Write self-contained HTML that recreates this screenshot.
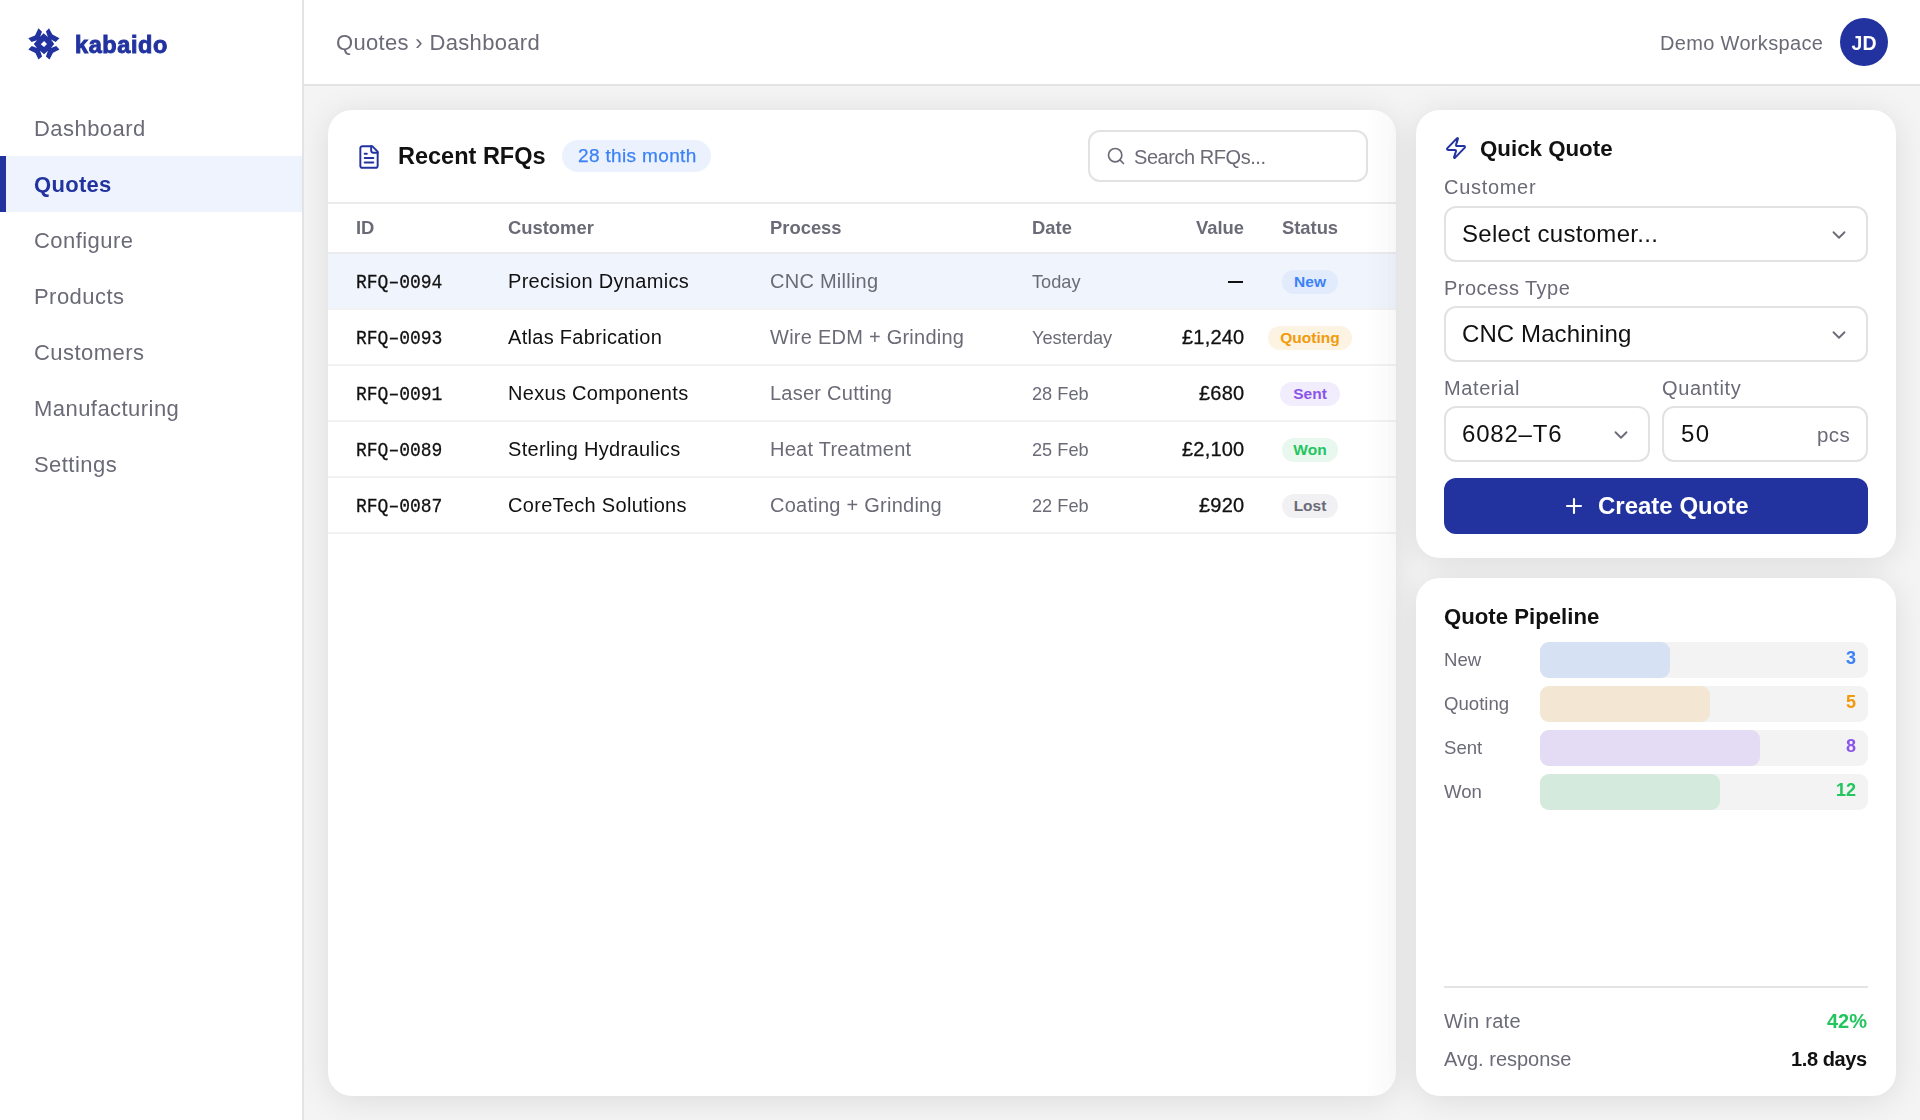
<!DOCTYPE html>
<html><head><meta charset="utf-8">
<style>
*{margin:0;padding:0;box-sizing:border-box}
html,body{width:1920px;height:1120px;overflow:hidden;background:#fff;font-family:"Liberation Sans",sans-serif;}
.a{will-change:transform}
.a{position:absolute;white-space:nowrap;line-height:1}
.b{font-weight:bold}
.g{color:#6b6b78}
.d{color:#111}
.r{position:absolute}
.card{position:absolute;background:#fff;border-radius:24px;box-shadow:0 4px 32px rgba(0,0,0,0.1)}
.box{position:absolute;border:2px solid #e2e2e4;border-radius:12px;background:#fff}
.mono{font-family:"Liberation Mono",monospace;color:#111}
.badge{position:absolute;height:24px;border-radius:12px;font-size:15.5px;font-weight:bold;line-height:24px;text-align:center}
</style></head><body>
<div class="r" style="left:0;top:0;width:304px;height:1120px;background:#fff;border-right:2px solid #e4e4e7"></div>
<svg class="a" style="left:28px;top:28px" width="32" height="32" viewBox="0 0 32 32"><path fill="#2233a0" fill-rule="evenodd" d="M10.5 0.3L14 3.7L12.1 8.7L15.6 5.2L19.9 9L17.9 3.5L21 0.3L24.4 6.5L31.5 10.3L27.7 13.9L23 11.6L26.2 16.1L23 19.9L28.2 18.1L31.5 21.5L25 24.8L21.5 31.5L17.9 28.4L19.9 22.8L16.1 26.2L12.1 22.8L14.1 28.4L10.5 31.5L7.4 25L0.3 21.5L3.8 18.1L9 20.1L5.8 16.1L9 12.3L3.6 13.9L0.3 10.3L7 7.6Z M16.1 13L19 16.1L16.1 19L12.8 16.3Z"/></svg>
<div class="a b" style="left:74.5px;top:34.11px;font-size:23.5px;letter-spacing:0.6px;color:#2233a0;-webkit-text-stroke:0.9px #2233a0;">kabaido</div>
<div class="r" style="left:0;top:156px;width:302px;height:56px;background:#eef3fd"></div>
<div class="r" style="left:0;top:156px;width:6px;height:56px;background:#2233a0"></div>
<div class="a g" style="left:34px;top:118.38px;font-size:22px;letter-spacing:0.45px;">Dashboard</div>
<div class="a b" style="left:34px;top:174.38px;font-size:22px;letter-spacing:0.3px;color:#2233a0">Quotes</div>
<div class="a g" style="left:34px;top:230.38px;font-size:22px;letter-spacing:0.45px;">Configure</div>
<div class="a g" style="left:34px;top:286.38px;font-size:22px;letter-spacing:0.45px;">Products</div>
<div class="a g" style="left:34px;top:342.38px;font-size:22px;letter-spacing:0.45px;">Customers</div>
<div class="a g" style="left:34px;top:398.38px;font-size:22px;letter-spacing:0.45px;">Manufacturing</div>
<div class="a g" style="left:34px;top:454.38px;font-size:22px;letter-spacing:0.45px;">Settings</div>
<div class="r" style="left:304px;top:0;width:1616px;height:86px;background:#fff;border-bottom:2px solid #e4e4e7"></div>
<div class="r" style="left:304px;top:86px;width:1616px;height:1034px;background:#f4f4f4"></div>
<div class="a g" style="left:336px;top:32.38px;font-size:22px;letter-spacing:0.33px;">Quotes › Dashboard</div>
<div class="a g" style="right:97px;top:33.07px;font-size:20px;letter-spacing:0.33px;">Demo Workspace</div>
<div class="r" style="left:1840px;top:18px;width:48px;height:48px;border-radius:50%;background:#2233a0"></div>
<div class="a b" style="left:1764px;width:200px;text-align:center;top:34.49px;font-size:19.5px;color:#fff">JD</div>
<div class="card" style="left:328px;top:110px;width:1068px;height:986px;overflow:hidden"><svg class="a" style="left:28px;top:34px" width="26" height="26" viewBox="0 0 24 24" fill="none" stroke="#2233a0" stroke-width="1.8" stroke-linecap="round" stroke-linejoin="round"><path d="M15 2H6a2 2 0 0 0-2 2v16a2 2 0 0 0 2 2h12a2 2 0 0 0 2-2V7Z"/><path d="M14 2v4a2 2 0 0 0 2 2h4"/><path d="M10 9H8"/><path d="M16 13H8"/><path d="M16 17H8"/></svg>
<div class="a b d" style="left:70px;top:35.11px;font-size:23.5px;">Recent RFQs</div>
<div class="r" style="left:234px;top:30px;width:149px;height:32px;border-radius:16px;background:#ebf2fd"></div>
<div class="a " style="left:250px;top:35.72px;font-size:19px;letter-spacing:0.35px;color:#3b82f6;-webkit-text-stroke:0.25px #3b82f6">28 this month</div>
<div class="box" style="left:760px;top:20px;width:280px;height:52px"></div>
<svg class="a" style="left:778px;top:36px" width="20" height="20" viewBox="0 0 24 24" fill="none" stroke="#6b6b78" stroke-width="2" stroke-linecap="round" stroke-linejoin="round"><circle cx="11" cy="11" r="8"/><path d="m21 21-4.3-4.3"/></svg>
<div class="a g" style="left:806px;top:37.27px;font-size:20px;letter-spacing:-0.45px;">Search RFQs...</div>
<div class="r" style="left:0;top:92px;width:1068px;height:2px;background:#ebebed"></div>
<div class="a b g" style="left:28px;top:109.02px;font-size:18.4px;">ID</div>
<div class="a b g" style="left:180px;top:109.02px;font-size:18.4px;">Customer</div>
<div class="a b g" style="left:442px;top:109.02px;font-size:18.4px;">Process</div>
<div class="a b g" style="left:704px;top:109.02px;font-size:18.4px;">Date</div>
<div class="a b g" style="right:152px;top:109.02px;font-size:18.4px;">Value</div>
<div class="a b g" style="left:882px;width:200px;text-align:center;top:109.02px;font-size:18.4px;">Status</div>
<div class="r" style="left:0;top:142px;width:1068px;height:2px;background:#ebebed"></div>
<div class="r" style="left:0;top:144px;width:1068px;height:54px;background:#eff4fd"></div>
<div class="a mono" style="left:28px;top:164.16px;font-size:18px;-webkit-text-stroke:0.25px #111;transform:scaleY(1.08);transform-origin:0 85%">RFQ–0094</div>
<div class="a d" style="left:180px;top:161.47px;font-size:20px;letter-spacing:0.3px;">Precision Dynamics</div>
<div class="a g" style="left:442px;top:161.47px;font-size:20px;letter-spacing:0.25px;">CNC Milling</div>
<div class="a g" style="left:704px;top:162.99px;font-size:18.2px;">Today</div>
<div class="r" style="left:900px;top:171px;width:15px;height:2px;background:#111"></div>
<div class="badge" style="left:954px;top:159.5px;width:56px;background:#e1ebfc;color:#3b82f6">New</div>
<div class="r" style="left:0;top:198px;width:1068px;height:2px;background:#f2f2f3"></div>
<div class="a mono" style="left:28px;top:220.16px;font-size:18px;-webkit-text-stroke:0.25px #111;transform:scaleY(1.08);transform-origin:0 85%">RFQ–0093</div>
<div class="a d" style="left:180px;top:217.47px;font-size:20px;letter-spacing:0.3px;">Atlas Fabrication</div>
<div class="a g" style="left:442px;top:217.47px;font-size:20px;letter-spacing:0.25px;">Wire EDM + Grinding</div>
<div class="a g" style="left:704px;top:218.99px;font-size:18.2px;">Yesterday</div>
<div class="a d" style="right:152px;top:217.47px;font-size:20px;letter-spacing:0.2px;-webkit-text-stroke:0.3px #111">£1,240</div>
<div class="badge" style="left:940px;top:215.5px;width:84px;background:#fdf3e2;color:#f29a0e">Quoting</div>
<div class="r" style="left:0;top:254px;width:1068px;height:2px;background:#f2f2f3"></div>
<div class="a mono" style="left:28px;top:276.16px;font-size:18px;-webkit-text-stroke:0.25px #111;transform:scaleY(1.08);transform-origin:0 85%">RFQ–0091</div>
<div class="a d" style="left:180px;top:273.47px;font-size:20px;letter-spacing:0.3px;">Nexus Components</div>
<div class="a g" style="left:442px;top:273.47px;font-size:20px;letter-spacing:0.25px;">Laser Cutting</div>
<div class="a g" style="left:704px;top:274.99px;font-size:18.2px;">28 Feb</div>
<div class="a d" style="right:152px;top:273.47px;font-size:20px;letter-spacing:0.2px;-webkit-text-stroke:0.3px #111">£680</div>
<div class="badge" style="left:952px;top:271.5px;width:60px;background:#f2edfd;color:#8b55ea">Sent</div>
<div class="r" style="left:0;top:310px;width:1068px;height:2px;background:#f2f2f3"></div>
<div class="a mono" style="left:28px;top:332.16px;font-size:18px;-webkit-text-stroke:0.25px #111;transform:scaleY(1.08);transform-origin:0 85%">RFQ–0089</div>
<div class="a d" style="left:180px;top:329.47px;font-size:20px;letter-spacing:0.3px;">Sterling Hydraulics</div>
<div class="a g" style="left:442px;top:329.47px;font-size:20px;letter-spacing:0.25px;">Heat Treatment</div>
<div class="a g" style="left:704px;top:330.99px;font-size:18.2px;">25 Feb</div>
<div class="a d" style="right:152px;top:329.47px;font-size:20px;letter-spacing:0.2px;-webkit-text-stroke:0.3px #111">£2,100</div>
<div class="badge" style="left:954px;top:327.5px;width:56px;background:#e9f8ef;color:#22c55e">Won</div>
<div class="r" style="left:0;top:366px;width:1068px;height:2px;background:#f2f2f3"></div>
<div class="a mono" style="left:28px;top:388.16px;font-size:18px;-webkit-text-stroke:0.25px #111;transform:scaleY(1.08);transform-origin:0 85%">RFQ–0087</div>
<div class="a d" style="left:180px;top:385.47px;font-size:20px;letter-spacing:0.3px;">CoreTech Solutions</div>
<div class="a g" style="left:442px;top:385.47px;font-size:20px;letter-spacing:0.25px;">Coating + Grinding</div>
<div class="a g" style="left:704px;top:386.99px;font-size:18.2px;">22 Feb</div>
<div class="a d" style="right:152px;top:385.47px;font-size:20px;letter-spacing:0.2px;-webkit-text-stroke:0.3px #111">£920</div>
<div class="badge" style="left:954px;top:383.5px;width:56px;background:#f1f1f3;color:#6b6b78">Lost</div>
<div class="r" style="left:0;top:422px;width:1068px;height:2px;background:#f2f2f3"></div>
<div class="r" style="right:0;top:0;width:32px;height:986px;background:linear-gradient(to right,rgba(0,0,0,0),rgba(0,0,0,0.022))"></div></div>
<div class="card" style="left:1416px;top:110px;width:480px;height:448px"><svg class="a" style="left:28px;top:26px" width="24" height="24" viewBox="0 0 24 24" fill="none" stroke="#2233a0" stroke-width="2" stroke-linecap="round" stroke-linejoin="round"><path d="M4 14a1 1 0 0 1-.78-1.63l9.9-10.2a.5.5 0 0 1 .86.46l-1.92 6.02A1 1 0 0 0 13 10h7a1 1 0 0 1 .78 1.63l-9.9 10.2a.5.5 0 0 1-.86-.46l1.92-6.02A1 1 0 0 0 11 14z"/></svg>
<div class="a b d" style="left:64px;top:27.72px;font-size:22.3px;">Quick Quote</div>
<div class="a g" style="left:28px;top:67.17px;font-size:20px;letter-spacing:0.7px;">Customer</div>
<div class="box" style="left:28px;top:96px;width:424px;height:56px"></div>
<div class="a d" style="left:46px;top:111.98px;font-size:24px;letter-spacing:0.3px;">Select customer...</div>
<svg class="a" style="left:412px;top:114px" width="22" height="22" viewBox="0 0 24 24" fill="none" stroke="#6b6b78" stroke-width="2" stroke-linecap="round" stroke-linejoin="round"><path d="m6 9 6 6 6-6"/></svg>
<div class="a g" style="left:28px;top:167.87px;font-size:20px;letter-spacing:0.45px;">Process Type</div>
<div class="box" style="left:28px;top:196px;width:424px;height:56px"></div>
<div class="a d" style="left:46px;top:211.98px;font-size:24px;letter-spacing:0.1px;">CNC Machining</div>
<svg class="a" style="left:412px;top:214px" width="22" height="22" viewBox="0 0 24 24" fill="none" stroke="#6b6b78" stroke-width="2" stroke-linecap="round" stroke-linejoin="round"><path d="m6 9 6 6 6-6"/></svg>
<div class="a g" style="left:28px;top:268.07px;font-size:20px;letter-spacing:0.6px;">Material</div>
<div class="a g" style="left:246px;top:268.07px;font-size:20px;letter-spacing:0.6px;">Quantity</div>
<div class="box" style="left:28px;top:296px;width:206px;height:56px"></div>
<div class="box" style="left:246px;top:296px;width:206px;height:56px"></div>
<div class="a d" style="left:46px;top:311.78px;font-size:24px;letter-spacing:0.8px;">6082–T6</div>
<svg class="a" style="left:194px;top:314px" width="22" height="22" viewBox="0 0 24 24" fill="none" stroke="#6b6b78" stroke-width="2" stroke-linecap="round" stroke-linejoin="round"><path d="m6 9 6 6 6-6"/></svg>
<div class="a d" style="left:264.5px;top:311.78px;font-size:24px;letter-spacing:1.5px;">50</div>
<div class="a g" style="right:46px;top:314.85px;font-size:20.5px;letter-spacing:0.4px;">pcs</div>
<div class="r" style="left:28px;top:368px;width:424px;height:56px;border-radius:12px;background:#2233a0"></div>
<svg class="a" style="left:146px;top:384px" width="24" height="24" viewBox="0 0 24 24" fill="none" stroke="#fff" stroke-width="2.1" stroke-linecap="round"><path d="M5 12h14"/><path d="M12 5v14"/></svg>
<div class="a b" style="left:182px;top:384.38px;font-size:24px;color:#fff">Create Quote</div></div>
<div class="card" style="left:1416px;top:578px;width:480px;height:518px"><div class="a b d" style="left:28px;top:27.71px;font-size:22.2px;">Quote Pipeline</div>
<div class="a g" style="left:28px;top:72.76px;font-size:18.6px;">New</div>
<div class="r" style="left:124px;top:64px;width:328px;height:36px;border-radius:9px;background:#f3f3f3"><div class="r" style="left:0;top:0;width:130px;height:36px;border-radius:9px;background:#d6e1f4"></div></div>
<div class="a b" style="right:40px;top:71.06px;font-size:18px;color:#3b82f6">3</div>
<div class="a g" style="left:28px;top:116.76px;font-size:18.6px;">Quoting</div>
<div class="r" style="left:124px;top:108px;width:328px;height:36px;border-radius:9px;background:#f3f3f3"><div class="r" style="left:0;top:0;width:170px;height:36px;border-radius:9px;background:#f3e6d2"></div></div>
<div class="a b" style="right:40px;top:115.06px;font-size:18px;color:#f29a0e">5</div>
<div class="a g" style="left:28px;top:160.76px;font-size:18.6px;">Sent</div>
<div class="r" style="left:124px;top:152px;width:328px;height:36px;border-radius:9px;background:#f3f3f3"><div class="r" style="left:0;top:0;width:220px;height:36px;border-radius:9px;background:#e3dcf4"></div></div>
<div class="a b" style="right:40px;top:159.06px;font-size:18px;color:#8b55ea">8</div>
<div class="a g" style="left:28px;top:204.76px;font-size:18.6px;">Won</div>
<div class="r" style="left:124px;top:196px;width:328px;height:36px;border-radius:9px;background:#f3f3f3"><div class="r" style="left:0;top:0;width:180px;height:36px;border-radius:9px;background:#d4eadc"></div></div>
<div class="a b" style="right:40px;top:203.06px;font-size:18px;color:#22c55e">12</div>
<div class="r" style="left:28px;top:408px;width:424px;height:2px;background:#e4e4e6"></div>
<div class="a g" style="left:28px;top:433.37px;font-size:20px;letter-spacing:0.3px;">Win rate</div>
<div class="a b" style="right:29px;top:433.37px;font-size:20px;color:#22c55e">42%</div>
<div class="a g" style="left:28px;top:471.37px;font-size:20px;">Avg. response</div>
<div class="a b d" style="right:29px;top:471.37px;font-size:20px;letter-spacing:-0.4px;">1.8 days</div></div>
</body></html>
